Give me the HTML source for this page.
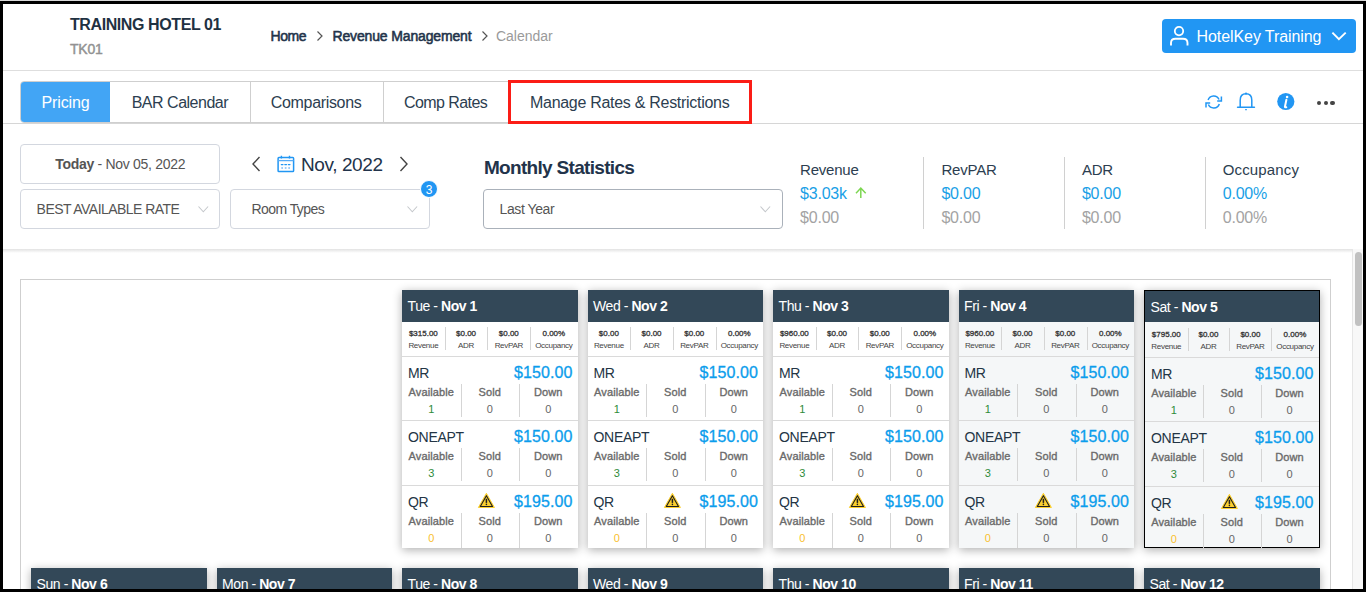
<!DOCTYPE html><html><head><meta charset="utf-8"><style>
html,body{margin:0;padding:0;}
body{width:1366px;height:592px;overflow:hidden;background:#000;position:relative;font-family:"Liberation Sans", sans-serif;}
.t{position:absolute;white-space:nowrap;line-height:1;}
.r{position:absolute;box-sizing:border-box;}
svg{position:absolute;overflow:visible;}
#page{position:absolute;left:3px;top:4px;width:1360px;height:585px;background:#fff;overflow:hidden;}
</style></head><body>
<div class="r" style="left:0;top:0;width:1366px;height:1px;background:#d8d8d8;"></div>
<div id="page"></div>

<div style="position:absolute;left:3px;top:4px;width:1360px;height:585px;overflow:hidden;"><div style="position:absolute;left:-3px;top:-4px;width:1366px;height:592px;">
<div class="t" style="left:70px;top:16.96px;font-size:16px;color:#1f3142;font-weight:bold;letter-spacing:-0.41px;">TRAINING HOTEL 01</div>
<div class="t" style="left:70px;top:41.95px;font-size:14px;color:#929292;letter-spacing:-0.2px;-webkit-text-stroke:0.45px #929292;">TK01</div>
<div class="t" style="left:270.5px;top:29.35px;font-size:14px;color:#22334a;letter-spacing:-0.45px;-webkit-text-stroke:0.55px #22334a;">Home</div>
<div class="t" style="left:332.5px;top:29.35px;font-size:14px;color:#22334a;letter-spacing:-0.15px;-webkit-text-stroke:0.55px #22334a;">Revenue Management</div>
<div class="t" style="left:496px;top:29.05px;font-size:14px;color:#9a9a9a;letter-spacing:-0.03px;">Calendar</div>
<svg style="left:316px;top:30px" width="8" height="12"><path d="M1.5 1.5 L6 6 L1.5 10.5" fill="none" stroke="#555" stroke-width="1.2"/></svg>
<svg style="left:480.7px;top:30px" width="8" height="12"><path d="M1.5 1.5 L6 6 L1.5 10.5" fill="none" stroke="#555" stroke-width="1.2"/></svg>
<div class="r" style="left:1162px;top:19px;width:194px;height:34px;background:#2196f3;border-radius:4px;"></div>
<svg style="left:1169px;top:26px" width="21" height="21"><circle cx="10" cy="5.1" r="4.2" fill="none" stroke="#fff" stroke-width="1.8"/><path d="M2 19.5 V17 Q2 12.8 6.5 12.8 H14 Q18.5 12.8 18.5 17 V19.5" fill="none" stroke="#fff" stroke-width="1.9"/></svg>
<div class="t" style="left:1196.6px;top:29.06px;font-size:16px;color:#ffffff;letter-spacing:-0.09px;">HotelKey Training</div>
<svg style="left:1331px;top:31px" width="16" height="11"><path d="M1.4 1.6 L7.9 8.2 L14.7 1.6" fill="none" stroke="#fff" stroke-width="1.9"/></svg>
<div class="r" style="left:3px;top:70px;width:1360px;height:1px;background:#dedede;"></div>
<div class="r" style="left:20px;top:81px;width:732px;height:42px;border:1px solid #cfcfcf;border-radius:4px 0 0 4px;"></div>
<div class="r" style="left:21px;top:82px;width:89px;height:40px;background:#42a5f5;border-radius:3px 0 0 3px;"></div>
<div class="r" style="left:250px;top:81px;width:1px;height:42px;background:#cfcfcf;"></div>
<div class="r" style="left:383px;top:81px;width:1px;height:42px;background:#cfcfcf;"></div>
<div class="r" style="left:3px;top:123px;width:1360px;height:1px;background:#d6d6d6;"></div>
<div class="t" style="left:41.5px;top:95.46px;font-size:16px;color:#ffffff;letter-spacing:-0.14px;">Pricing</div>
<div class="t" style="left:131.7px;top:95.46px;font-size:16px;color:#2c3e50;letter-spacing:-0.49px;">BAR Calendar</div>
<div class="t" style="left:270.8px;top:95.46px;font-size:16px;color:#2c3e50;letter-spacing:-0.33px;">Comparisons</div>
<div class="t" style="left:404px;top:95.46px;font-size:16px;color:#2c3e50;letter-spacing:-0.58px;">Comp Rates</div>
<div class="t" style="left:530px;top:95.46px;font-size:16px;color:#2c3e50;letter-spacing:-0.29px;">Manage Rates &amp; Restrictions</div>
<div class="r" style="left:508px;top:79.6px;width:244.4px;height:44px;border:3px solid #fb1d16;"></div>
<svg style="left:1205px;top:94px" width="18" height="16" viewBox="0 0 18 16"><g fill="none" stroke="#2196f3" stroke-width="1.5"><path d="M3.1 6.1 A5.9 5.9 0 0 1 14.05 5.5"/><path d="M16.4 2.4 V6.9 H12.2"/><g transform="rotate(180 8.7 8)"><path d="M3.1 6.1 A5.9 5.9 0 0 1 14.05 5.5"/><path d="M16.4 2.4 V6.9 H12.2"/></g></g></svg>
<svg style="left:1237px;top:92px" width="18" height="19" viewBox="0 0 18 19"><path d="M3.2 15 V8.2 Q3.2 1.8 9 1.8 Q14.8 1.8 14.8 8.2 V15" fill="none" stroke="#2196f3" stroke-width="1.5"/><path d="M0.6 15.2 H17.4" stroke="#2196f3" stroke-width="1.6" stroke-linecap="round"/><circle cx="9" cy="1.6" r="1.1" fill="#2196f3"/><path d="M8.2 17.6 H9.8" stroke="#2196f3" stroke-width="1.3"/></svg>
<svg style="left:1277px;top:92px" width="18" height="19"><circle cx="8.8" cy="9.5" r="8.6" fill="#2196f3"/><circle cx="10.1" cy="5" r="1.3" fill="#fff"/><path d="M9.4 7.8 L7.9 14.8 Q7.9 15.6 9.3 15.2" fill="none" stroke="#fff" stroke-width="2" stroke-linecap="round"/></svg>
<div class="r" style="left:1317.1px;top:100.6px;width:4.4px;height:4.4px;border-radius:50%;background:#444;"></div>
<div class="r" style="left:1323.7px;top:100.6px;width:4.4px;height:4.4px;border-radius:50%;background:#444;"></div>
<div class="r" style="left:1330.3px;top:100.6px;width:4.4px;height:4.4px;border-radius:50%;background:#444;"></div>
<div class="r" style="left:20px;top:144px;width:200px;height:40px;border:1px solid #d3d7df;border-radius:4px;"></div>
<div class="t" style="left:55.2px;top:157.15px;font-size:14px;color:#555;letter-spacing:-0.3px;"><b>Today</b> - Nov 05, 2022</div>
<div class="r" style="left:20px;top:189px;width:200px;height:40px;border:1px solid #d3d7df;border-radius:4px;"></div>
<div class="t" style="left:36.6px;top:202.25px;font-size:14px;color:#555;letter-spacing:-0.54px;">BEST AVAILABLE RATE</div>
<svg style="left:197.5px;top:205.6px" width="11" height="7"><path d="M0.5 0.5 L5.3 5.8 L10.1 0.5" fill="none" stroke="#c5c8cc" stroke-width="1.1"/></svg>
<div class="r" style="left:230px;top:189px;width:200px;height:40px;border:1px solid #d3d7df;border-radius:4px;"></div>
<div class="t" style="left:251.5px;top:201.95px;font-size:14px;color:#555;letter-spacing:-0.57px;">Room Types</div>
<svg style="left:406.5px;top:205.6px" width="11" height="7"><path d="M0.5 0.5 L5.3 5.8 L10.1 0.5" fill="none" stroke="#c5c8cc" stroke-width="1.1"/></svg>
<div class="r" style="left:420px;top:180px;width:18px;height:18px;border-radius:50%;background:#2196f3;border:1px solid #fff;"></div>
<div class="t" style="left:421px;top:183.84px;font-size:12px;color:#fff;width:16px;text-align:center;">3</div>
<svg style="left:251px;top:156px" width="10" height="16"><path d="M8.5 1 L2 8 L8.5 15" fill="none" stroke="#444" stroke-width="1.4"/></svg>
<svg style="left:399px;top:156px" width="10" height="16"><path d="M1.5 1 L8 8 L1.5 15" fill="none" stroke="#444" stroke-width="1.4"/></svg>
<svg style="left:277px;top:155px" width="18" height="18" viewBox="0 0 18 18"><rect x="1.1" y="2.6" width="15.5" height="14" rx="0.8" fill="none" stroke="#2196f3" stroke-width="1.5"/><path d="M1.1 5.6 H16.6" stroke="#59acf6" stroke-width="1.3"/><path d="M4.4 0.8 V3.6 M12.5 0.8 V3.6" stroke="#2196f3" stroke-width="1.4"/><path d="M4.3 9.6 H6 M7.8 9.6 H9.5 M11.3 9.6 H13" stroke="#2196f3" stroke-width="1.2" stroke-linecap="round"/><path d="M4.3 13 H6 M7.8 13 H9.5 M11.3 13 H13" stroke="#7dbcf7" stroke-width="1.3"/></svg>
<div class="t" style="left:301px;top:154.82px;font-size:19px;color:#22334a;letter-spacing:-0.4px;">Nov, 2022</div>
<div class="t" style="left:483.9px;top:158.22px;font-size:19px;color:#22334a;font-weight:bold;letter-spacing:-0.68px;">Monthly Statistics</div>
<div class="r" style="left:483px;top:189px;width:300px;height:40px;border:1px solid #aab1ba;border-radius:4px;"></div>
<div class="t" style="left:499.6px;top:202.45px;font-size:14px;color:#555;letter-spacing:-0.42px;">Last Year</div>
<svg style="left:760px;top:205.6px" width="11" height="7"><path d="M0.5 0.5 L5.3 5.8 L10.1 0.5" fill="none" stroke="#c5c8cc" stroke-width="1.1"/></svg>
<div class="t" style="left:800px;top:162.30px;font-size:15px;color:#2c3e50;letter-spacing:-0.2px;">Revenue</div>
<div class="t" style="left:800px;top:185.66px;font-size:16px;color:#1a9fe6;letter-spacing:-0.2px;">$3.03k</div>
<div class="t" style="left:800px;top:209.76px;font-size:16px;color:#a3a3a3;letter-spacing:-0.2px;">$0.00</div>
<div class="t" style="left:941.4px;top:162.30px;font-size:15px;color:#2c3e50;letter-spacing:-0.2px;">RevPAR</div>
<div class="t" style="left:941.4px;top:185.66px;font-size:16px;color:#1a9fe6;letter-spacing:-0.2px;">$0.00</div>
<div class="t" style="left:941.4px;top:209.76px;font-size:16px;color:#a3a3a3;letter-spacing:-0.2px;">$0.00</div>
<div class="t" style="left:1081.9px;top:162.30px;font-size:15px;color:#2c3e50;letter-spacing:-0.2px;">ADR</div>
<div class="t" style="left:1081.9px;top:185.66px;font-size:16px;color:#1a9fe6;letter-spacing:-0.2px;">$0.00</div>
<div class="t" style="left:1081.9px;top:209.76px;font-size:16px;color:#a3a3a3;letter-spacing:-0.2px;">$0.00</div>
<div class="t" style="left:1222.7px;top:162.30px;font-size:15px;color:#2c3e50;letter-spacing:0.15px;">Occupancy</div>
<div class="t" style="left:1222.7px;top:185.66px;font-size:16px;color:#1a9fe6;letter-spacing:-0.2px;">0.00%</div>
<div class="t" style="left:1222.7px;top:209.76px;font-size:16px;color:#a3a3a3;letter-spacing:-0.2px;">0.00%</div>
<svg style="left:855px;top:187px" width="12" height="12"><path d="M5.8 11 V1.5 M1 6.2 L5.8 1.1 L10.7 6.2" fill="none" stroke="#7dd652" stroke-width="1.5"/></svg>
<div class="r" style="left:923px;top:157px;width:1px;height:72px;background:#d0d0d0;"></div>
<div class="r" style="left:1064px;top:157px;width:1px;height:72px;background:#d0d0d0;"></div>
<div class="r" style="left:1205px;top:157px;width:1px;height:72px;background:#d0d0d0;"></div>
<div class="r" style="left:3px;top:249px;width:1349px;height:4px;background:linear-gradient(#e2e2e2,#fff);"></div>
<div class="r" style="left:1352px;top:249px;width:11px;height:340px;background:#f8f8f8;border-left:1px solid #e6e6e6;"></div>
<div class="r" style="left:1355px;top:252px;width:7px;height:74px;background:#c1c1c1;border-radius:4px;"></div>
<div class="r" style="left:20px;top:279px;width:1311px;height:400px;border:1px solid #cfcfcf;"></div>
<div class="r" style="left:402px;top:290px;width:175.5px;height:258px;background:#ffffff;box-shadow:0 2px 9px rgba(0,0,0,0.32);"></div>
<div class="r" style="left:402px;top:290px;width:175.5px;height:32px;background:#334858;"></div>
<div class="t" style="left:407.6px;top:299.15px;font-size:14px;color:#ffffff;letter-spacing:-0.44px;">Tue - <b>Nov 1</b></div>
<div class="t" style="left:402px;top:330.23px;font-size:8px;color:#333;width:42.7px;text-align:center;-webkit-text-stroke:0.3px #333;">$315.00</div>
<div class="t" style="left:402px;top:342.13px;font-size:8px;color:#444;letter-spacing:-0.3px;width:42.7px;text-align:center;">Revenue</div>
<div class="t" style="left:444.7px;top:330.23px;font-size:8px;color:#333;width:42.7px;text-align:center;-webkit-text-stroke:0.3px #333;">$0.00</div>
<div class="t" style="left:444.7px;top:342.13px;font-size:8px;color:#444;letter-spacing:-0.3px;width:42.7px;text-align:center;">ADR</div>
<div class="r" style="left:444.7px;top:327px;width:1px;height:23.4px;background:#d5d5d5;"></div>
<div class="t" style="left:487.4px;top:330.23px;font-size:8px;color:#333;width:42.79999999999998px;text-align:center;-webkit-text-stroke:0.3px #333;">$0.00</div>
<div class="t" style="left:487.4px;top:342.13px;font-size:8px;color:#444;letter-spacing:-0.3px;width:42.79999999999998px;text-align:center;">RevPAR</div>
<div class="r" style="left:487.4px;top:327px;width:1px;height:23.4px;background:#d5d5d5;"></div>
<div class="t" style="left:530.2px;top:330.23px;font-size:8px;color:#333;width:47.30000000000001px;text-align:center;-webkit-text-stroke:0.3px #333;">0.00%</div>
<div class="t" style="left:530.2px;top:342.13px;font-size:8px;color:#444;letter-spacing:-0.3px;width:47.30000000000001px;text-align:center;">Occupancy</div>
<div class="r" style="left:530.2px;top:327px;width:1px;height:23.4px;background:#d5d5d5;"></div>
<div class="r" style="left:402px;top:356px;width:175.5px;height:1px;background:#dadada;"></div>
<div class="t" style="left:408px;top:365.95px;font-size:14px;color:#233545;letter-spacing:-0.3px;">MR</div>
<div class="t" style="left:502.5px;top:364.76px;font-size:16px;color:#0b9dec;letter-spacing:0.1px;width:70px;text-align:right;-webkit-text-stroke:0.3px #0b9dec;">$150.00</div>
<div class="t" style="left:402.0px;top:386.59px;font-size:11px;color:#6a6a6a;letter-spacing:0.1px;width:58.5px;text-align:center;-webkit-text-stroke:0.35px #6a6a6a;">Available</div>
<div class="t" style="left:402.0px;top:404.19px;font-size:11px;color:#2e8b3a;width:58.5px;text-align:center;">1</div>
<div class="t" style="left:460.5px;top:386.59px;font-size:11px;color:#6a6a6a;letter-spacing:0.1px;width:58.5px;text-align:center;-webkit-text-stroke:0.35px #6a6a6a;">Sold</div>
<div class="t" style="left:460.5px;top:404.19px;font-size:11px;color:#666;width:58.5px;text-align:center;">0</div>
<div class="r" style="left:460.5px;top:384.4px;width:1px;height:32.4px;background:#d5d5d5;"></div>
<div class="t" style="left:519.0px;top:386.59px;font-size:11px;color:#6a6a6a;letter-spacing:0.1px;width:58.5px;text-align:center;-webkit-text-stroke:0.35px #6a6a6a;">Down</div>
<div class="t" style="left:519.0px;top:404.19px;font-size:11px;color:#666;width:58.5px;text-align:center;">0</div>
<div class="r" style="left:519.0px;top:384.4px;width:1px;height:32.4px;background:#d5d5d5;"></div>
<div class="r" style="left:402px;top:420px;width:175.5px;height:1px;background:#dadada;"></div>
<div class="t" style="left:408px;top:429.95px;font-size:14px;color:#233545;letter-spacing:-0.3px;">ONEAPT</div>
<div class="t" style="left:502.5px;top:428.76px;font-size:16px;color:#0b9dec;letter-spacing:0.1px;width:70px;text-align:right;-webkit-text-stroke:0.3px #0b9dec;">$150.00</div>
<div class="t" style="left:402.0px;top:450.59px;font-size:11px;color:#6a6a6a;letter-spacing:0.1px;width:58.5px;text-align:center;-webkit-text-stroke:0.35px #6a6a6a;">Available</div>
<div class="t" style="left:402.0px;top:468.19px;font-size:11px;color:#2e8b3a;width:58.5px;text-align:center;">3</div>
<div class="t" style="left:460.5px;top:450.59px;font-size:11px;color:#6a6a6a;letter-spacing:0.1px;width:58.5px;text-align:center;-webkit-text-stroke:0.35px #6a6a6a;">Sold</div>
<div class="t" style="left:460.5px;top:468.19px;font-size:11px;color:#666;width:58.5px;text-align:center;">0</div>
<div class="r" style="left:460.5px;top:448.4px;width:1px;height:32.4px;background:#d5d5d5;"></div>
<div class="t" style="left:519.0px;top:450.59px;font-size:11px;color:#6a6a6a;letter-spacing:0.1px;width:58.5px;text-align:center;-webkit-text-stroke:0.35px #6a6a6a;">Down</div>
<div class="t" style="left:519.0px;top:468.19px;font-size:11px;color:#666;width:58.5px;text-align:center;">0</div>
<div class="r" style="left:519.0px;top:448.4px;width:1px;height:32.4px;background:#d5d5d5;"></div>
<div class="r" style="left:402px;top:485px;width:175.5px;height:1px;background:#dadada;"></div>
<div class="t" style="left:408px;top:494.95px;font-size:14px;color:#233545;letter-spacing:-0.3px;">QR</div>
<div class="t" style="left:502.5px;top:493.76px;font-size:16px;color:#0b9dec;letter-spacing:0.1px;width:70px;text-align:right;-webkit-text-stroke:0.3px #0b9dec;">$195.00</div>
<svg style="left:478px;top:492px" width="17" height="17" viewBox="0 0 17 17"><path d="M8.4 1.3 L16.4 15.5 H0.4 Z" fill="#fbcf2f" stroke="#fbcf2f" stroke-width="1" stroke-linejoin="round"/><path d="M8.4 3.7 L14.5 14.5 H2.3 Z" fill="none" stroke="#1f1f1f" stroke-width="1.1" stroke-linejoin="round"/><path d="M8.4 6.8 V10.9" stroke="#1f1f1f" stroke-width="1.5"/><circle cx="8.4" cy="12.4" r="0.8" fill="#1f1f1f"/></svg>
<div class="t" style="left:402.0px;top:515.59px;font-size:11px;color:#6a6a6a;letter-spacing:0.1px;width:58.5px;text-align:center;-webkit-text-stroke:0.35px #6a6a6a;">Available</div>
<div class="t" style="left:402.0px;top:533.19px;font-size:11px;color:#f9c02c;width:58.5px;text-align:center;">0</div>
<div class="t" style="left:460.5px;top:515.59px;font-size:11px;color:#6a6a6a;letter-spacing:0.1px;width:58.5px;text-align:center;-webkit-text-stroke:0.35px #6a6a6a;">Sold</div>
<div class="t" style="left:460.5px;top:533.19px;font-size:11px;color:#666;width:58.5px;text-align:center;">0</div>
<div class="r" style="left:460.5px;top:513.4px;width:1px;height:34.60000000000002px;background:#d5d5d5;"></div>
<div class="t" style="left:519.0px;top:515.59px;font-size:11px;color:#6a6a6a;letter-spacing:0.1px;width:58.5px;text-align:center;-webkit-text-stroke:0.35px #6a6a6a;">Down</div>
<div class="t" style="left:519.0px;top:533.19px;font-size:11px;color:#666;width:58.5px;text-align:center;">0</div>
<div class="r" style="left:519.0px;top:513.4px;width:1px;height:34.60000000000002px;background:#d5d5d5;"></div>
<div class="r" style="left:587.5px;top:290px;width:175.5px;height:258px;background:#ffffff;box-shadow:0 2px 9px rgba(0,0,0,0.32);"></div>
<div class="r" style="left:587.5px;top:290px;width:175.5px;height:32px;background:#334858;"></div>
<div class="t" style="left:593.1px;top:299.15px;font-size:14px;color:#ffffff;letter-spacing:-0.44px;">Wed - <b>Nov 2</b></div>
<div class="t" style="left:587.5px;top:330.23px;font-size:8px;color:#333;width:42.7px;text-align:center;-webkit-text-stroke:0.3px #333;">$0.00</div>
<div class="t" style="left:587.5px;top:342.13px;font-size:8px;color:#444;letter-spacing:-0.3px;width:42.7px;text-align:center;">Revenue</div>
<div class="t" style="left:630.2px;top:330.23px;font-size:8px;color:#333;width:42.7px;text-align:center;-webkit-text-stroke:0.3px #333;">$0.00</div>
<div class="t" style="left:630.2px;top:342.13px;font-size:8px;color:#444;letter-spacing:-0.3px;width:42.7px;text-align:center;">ADR</div>
<div class="r" style="left:630.2px;top:327px;width:1px;height:23.4px;background:#d5d5d5;"></div>
<div class="t" style="left:672.9px;top:330.23px;font-size:8px;color:#333;width:42.79999999999998px;text-align:center;-webkit-text-stroke:0.3px #333;">$0.00</div>
<div class="t" style="left:672.9px;top:342.13px;font-size:8px;color:#444;letter-spacing:-0.3px;width:42.79999999999998px;text-align:center;">RevPAR</div>
<div class="r" style="left:672.9px;top:327px;width:1px;height:23.4px;background:#d5d5d5;"></div>
<div class="t" style="left:715.7px;top:330.23px;font-size:8px;color:#333;width:47.30000000000001px;text-align:center;-webkit-text-stroke:0.3px #333;">0.00%</div>
<div class="t" style="left:715.7px;top:342.13px;font-size:8px;color:#444;letter-spacing:-0.3px;width:47.30000000000001px;text-align:center;">Occupancy</div>
<div class="r" style="left:715.7px;top:327px;width:1px;height:23.4px;background:#d5d5d5;"></div>
<div class="r" style="left:587.5px;top:356px;width:175.5px;height:1px;background:#dadada;"></div>
<div class="t" style="left:593.5px;top:365.95px;font-size:14px;color:#233545;letter-spacing:-0.3px;">MR</div>
<div class="t" style="left:688.0px;top:364.76px;font-size:16px;color:#0b9dec;letter-spacing:0.1px;width:70px;text-align:right;-webkit-text-stroke:0.3px #0b9dec;">$150.00</div>
<div class="t" style="left:587.5px;top:386.59px;font-size:11px;color:#6a6a6a;letter-spacing:0.1px;width:58.5px;text-align:center;-webkit-text-stroke:0.35px #6a6a6a;">Available</div>
<div class="t" style="left:587.5px;top:404.19px;font-size:11px;color:#2e8b3a;width:58.5px;text-align:center;">1</div>
<div class="t" style="left:646.0px;top:386.59px;font-size:11px;color:#6a6a6a;letter-spacing:0.1px;width:58.5px;text-align:center;-webkit-text-stroke:0.35px #6a6a6a;">Sold</div>
<div class="t" style="left:646.0px;top:404.19px;font-size:11px;color:#666;width:58.5px;text-align:center;">0</div>
<div class="r" style="left:646.0px;top:384.4px;width:1px;height:32.4px;background:#d5d5d5;"></div>
<div class="t" style="left:704.5px;top:386.59px;font-size:11px;color:#6a6a6a;letter-spacing:0.1px;width:58.5px;text-align:center;-webkit-text-stroke:0.35px #6a6a6a;">Down</div>
<div class="t" style="left:704.5px;top:404.19px;font-size:11px;color:#666;width:58.5px;text-align:center;">0</div>
<div class="r" style="left:704.5px;top:384.4px;width:1px;height:32.4px;background:#d5d5d5;"></div>
<div class="r" style="left:587.5px;top:420px;width:175.5px;height:1px;background:#dadada;"></div>
<div class="t" style="left:593.5px;top:429.95px;font-size:14px;color:#233545;letter-spacing:-0.3px;">ONEAPT</div>
<div class="t" style="left:688.0px;top:428.76px;font-size:16px;color:#0b9dec;letter-spacing:0.1px;width:70px;text-align:right;-webkit-text-stroke:0.3px #0b9dec;">$150.00</div>
<div class="t" style="left:587.5px;top:450.59px;font-size:11px;color:#6a6a6a;letter-spacing:0.1px;width:58.5px;text-align:center;-webkit-text-stroke:0.35px #6a6a6a;">Available</div>
<div class="t" style="left:587.5px;top:468.19px;font-size:11px;color:#2e8b3a;width:58.5px;text-align:center;">3</div>
<div class="t" style="left:646.0px;top:450.59px;font-size:11px;color:#6a6a6a;letter-spacing:0.1px;width:58.5px;text-align:center;-webkit-text-stroke:0.35px #6a6a6a;">Sold</div>
<div class="t" style="left:646.0px;top:468.19px;font-size:11px;color:#666;width:58.5px;text-align:center;">0</div>
<div class="r" style="left:646.0px;top:448.4px;width:1px;height:32.4px;background:#d5d5d5;"></div>
<div class="t" style="left:704.5px;top:450.59px;font-size:11px;color:#6a6a6a;letter-spacing:0.1px;width:58.5px;text-align:center;-webkit-text-stroke:0.35px #6a6a6a;">Down</div>
<div class="t" style="left:704.5px;top:468.19px;font-size:11px;color:#666;width:58.5px;text-align:center;">0</div>
<div class="r" style="left:704.5px;top:448.4px;width:1px;height:32.4px;background:#d5d5d5;"></div>
<div class="r" style="left:587.5px;top:485px;width:175.5px;height:1px;background:#dadada;"></div>
<div class="t" style="left:593.5px;top:494.95px;font-size:14px;color:#233545;letter-spacing:-0.3px;">QR</div>
<div class="t" style="left:688.0px;top:493.76px;font-size:16px;color:#0b9dec;letter-spacing:0.1px;width:70px;text-align:right;-webkit-text-stroke:0.3px #0b9dec;">$195.00</div>
<svg style="left:663.5px;top:492px" width="17" height="17" viewBox="0 0 17 17"><path d="M8.4 1.3 L16.4 15.5 H0.4 Z" fill="#fbcf2f" stroke="#fbcf2f" stroke-width="1" stroke-linejoin="round"/><path d="M8.4 3.7 L14.5 14.5 H2.3 Z" fill="none" stroke="#1f1f1f" stroke-width="1.1" stroke-linejoin="round"/><path d="M8.4 6.8 V10.9" stroke="#1f1f1f" stroke-width="1.5"/><circle cx="8.4" cy="12.4" r="0.8" fill="#1f1f1f"/></svg>
<div class="t" style="left:587.5px;top:515.59px;font-size:11px;color:#6a6a6a;letter-spacing:0.1px;width:58.5px;text-align:center;-webkit-text-stroke:0.35px #6a6a6a;">Available</div>
<div class="t" style="left:587.5px;top:533.19px;font-size:11px;color:#f9c02c;width:58.5px;text-align:center;">0</div>
<div class="t" style="left:646.0px;top:515.59px;font-size:11px;color:#6a6a6a;letter-spacing:0.1px;width:58.5px;text-align:center;-webkit-text-stroke:0.35px #6a6a6a;">Sold</div>
<div class="t" style="left:646.0px;top:533.19px;font-size:11px;color:#666;width:58.5px;text-align:center;">0</div>
<div class="r" style="left:646.0px;top:513.4px;width:1px;height:34.60000000000002px;background:#d5d5d5;"></div>
<div class="t" style="left:704.5px;top:515.59px;font-size:11px;color:#6a6a6a;letter-spacing:0.1px;width:58.5px;text-align:center;-webkit-text-stroke:0.35px #6a6a6a;">Down</div>
<div class="t" style="left:704.5px;top:533.19px;font-size:11px;color:#666;width:58.5px;text-align:center;">0</div>
<div class="r" style="left:704.5px;top:513.4px;width:1px;height:34.60000000000002px;background:#d5d5d5;"></div>
<div class="r" style="left:773px;top:290px;width:175.5px;height:258px;background:#ffffff;box-shadow:0 2px 9px rgba(0,0,0,0.32);"></div>
<div class="r" style="left:773px;top:290px;width:175.5px;height:32px;background:#334858;"></div>
<div class="t" style="left:778.6px;top:299.15px;font-size:14px;color:#ffffff;letter-spacing:-0.44px;">Thu - <b>Nov 3</b></div>
<div class="t" style="left:773px;top:330.23px;font-size:8px;color:#333;width:42.7px;text-align:center;-webkit-text-stroke:0.3px #333;">$960.00</div>
<div class="t" style="left:773px;top:342.13px;font-size:8px;color:#444;letter-spacing:-0.3px;width:42.7px;text-align:center;">Revenue</div>
<div class="t" style="left:815.7px;top:330.23px;font-size:8px;color:#333;width:42.7px;text-align:center;-webkit-text-stroke:0.3px #333;">$0.00</div>
<div class="t" style="left:815.7px;top:342.13px;font-size:8px;color:#444;letter-spacing:-0.3px;width:42.7px;text-align:center;">ADR</div>
<div class="r" style="left:815.7px;top:327px;width:1px;height:23.4px;background:#d5d5d5;"></div>
<div class="t" style="left:858.4px;top:330.23px;font-size:8px;color:#333;width:42.79999999999998px;text-align:center;-webkit-text-stroke:0.3px #333;">$0.00</div>
<div class="t" style="left:858.4px;top:342.13px;font-size:8px;color:#444;letter-spacing:-0.3px;width:42.79999999999998px;text-align:center;">RevPAR</div>
<div class="r" style="left:858.4px;top:327px;width:1px;height:23.4px;background:#d5d5d5;"></div>
<div class="t" style="left:901.2px;top:330.23px;font-size:8px;color:#333;width:47.30000000000001px;text-align:center;-webkit-text-stroke:0.3px #333;">0.00%</div>
<div class="t" style="left:901.2px;top:342.13px;font-size:8px;color:#444;letter-spacing:-0.3px;width:47.30000000000001px;text-align:center;">Occupancy</div>
<div class="r" style="left:901.2px;top:327px;width:1px;height:23.4px;background:#d5d5d5;"></div>
<div class="r" style="left:773px;top:356px;width:175.5px;height:1px;background:#dadada;"></div>
<div class="t" style="left:779px;top:365.95px;font-size:14px;color:#233545;letter-spacing:-0.3px;">MR</div>
<div class="t" style="left:873.5px;top:364.76px;font-size:16px;color:#0b9dec;letter-spacing:0.1px;width:70px;text-align:right;-webkit-text-stroke:0.3px #0b9dec;">$150.00</div>
<div class="t" style="left:773.0px;top:386.59px;font-size:11px;color:#6a6a6a;letter-spacing:0.1px;width:58.5px;text-align:center;-webkit-text-stroke:0.35px #6a6a6a;">Available</div>
<div class="t" style="left:773.0px;top:404.19px;font-size:11px;color:#2e8b3a;width:58.5px;text-align:center;">1</div>
<div class="t" style="left:831.5px;top:386.59px;font-size:11px;color:#6a6a6a;letter-spacing:0.1px;width:58.5px;text-align:center;-webkit-text-stroke:0.35px #6a6a6a;">Sold</div>
<div class="t" style="left:831.5px;top:404.19px;font-size:11px;color:#666;width:58.5px;text-align:center;">0</div>
<div class="r" style="left:831.5px;top:384.4px;width:1px;height:32.4px;background:#d5d5d5;"></div>
<div class="t" style="left:890.0px;top:386.59px;font-size:11px;color:#6a6a6a;letter-spacing:0.1px;width:58.5px;text-align:center;-webkit-text-stroke:0.35px #6a6a6a;">Down</div>
<div class="t" style="left:890.0px;top:404.19px;font-size:11px;color:#666;width:58.5px;text-align:center;">0</div>
<div class="r" style="left:890.0px;top:384.4px;width:1px;height:32.4px;background:#d5d5d5;"></div>
<div class="r" style="left:773px;top:420px;width:175.5px;height:1px;background:#dadada;"></div>
<div class="t" style="left:779px;top:429.95px;font-size:14px;color:#233545;letter-spacing:-0.3px;">ONEAPT</div>
<div class="t" style="left:873.5px;top:428.76px;font-size:16px;color:#0b9dec;letter-spacing:0.1px;width:70px;text-align:right;-webkit-text-stroke:0.3px #0b9dec;">$150.00</div>
<div class="t" style="left:773.0px;top:450.59px;font-size:11px;color:#6a6a6a;letter-spacing:0.1px;width:58.5px;text-align:center;-webkit-text-stroke:0.35px #6a6a6a;">Available</div>
<div class="t" style="left:773.0px;top:468.19px;font-size:11px;color:#2e8b3a;width:58.5px;text-align:center;">3</div>
<div class="t" style="left:831.5px;top:450.59px;font-size:11px;color:#6a6a6a;letter-spacing:0.1px;width:58.5px;text-align:center;-webkit-text-stroke:0.35px #6a6a6a;">Sold</div>
<div class="t" style="left:831.5px;top:468.19px;font-size:11px;color:#666;width:58.5px;text-align:center;">0</div>
<div class="r" style="left:831.5px;top:448.4px;width:1px;height:32.4px;background:#d5d5d5;"></div>
<div class="t" style="left:890.0px;top:450.59px;font-size:11px;color:#6a6a6a;letter-spacing:0.1px;width:58.5px;text-align:center;-webkit-text-stroke:0.35px #6a6a6a;">Down</div>
<div class="t" style="left:890.0px;top:468.19px;font-size:11px;color:#666;width:58.5px;text-align:center;">0</div>
<div class="r" style="left:890.0px;top:448.4px;width:1px;height:32.4px;background:#d5d5d5;"></div>
<div class="r" style="left:773px;top:485px;width:175.5px;height:1px;background:#dadada;"></div>
<div class="t" style="left:779px;top:494.95px;font-size:14px;color:#233545;letter-spacing:-0.3px;">QR</div>
<div class="t" style="left:873.5px;top:493.76px;font-size:16px;color:#0b9dec;letter-spacing:0.1px;width:70px;text-align:right;-webkit-text-stroke:0.3px #0b9dec;">$195.00</div>
<svg style="left:849px;top:492px" width="17" height="17" viewBox="0 0 17 17"><path d="M8.4 1.3 L16.4 15.5 H0.4 Z" fill="#fbcf2f" stroke="#fbcf2f" stroke-width="1" stroke-linejoin="round"/><path d="M8.4 3.7 L14.5 14.5 H2.3 Z" fill="none" stroke="#1f1f1f" stroke-width="1.1" stroke-linejoin="round"/><path d="M8.4 6.8 V10.9" stroke="#1f1f1f" stroke-width="1.5"/><circle cx="8.4" cy="12.4" r="0.8" fill="#1f1f1f"/></svg>
<div class="t" style="left:773.0px;top:515.59px;font-size:11px;color:#6a6a6a;letter-spacing:0.1px;width:58.5px;text-align:center;-webkit-text-stroke:0.35px #6a6a6a;">Available</div>
<div class="t" style="left:773.0px;top:533.19px;font-size:11px;color:#f9c02c;width:58.5px;text-align:center;">0</div>
<div class="t" style="left:831.5px;top:515.59px;font-size:11px;color:#6a6a6a;letter-spacing:0.1px;width:58.5px;text-align:center;-webkit-text-stroke:0.35px #6a6a6a;">Sold</div>
<div class="t" style="left:831.5px;top:533.19px;font-size:11px;color:#666;width:58.5px;text-align:center;">0</div>
<div class="r" style="left:831.5px;top:513.4px;width:1px;height:34.60000000000002px;background:#d5d5d5;"></div>
<div class="t" style="left:890.0px;top:515.59px;font-size:11px;color:#6a6a6a;letter-spacing:0.1px;width:58.5px;text-align:center;-webkit-text-stroke:0.35px #6a6a6a;">Down</div>
<div class="t" style="left:890.0px;top:533.19px;font-size:11px;color:#666;width:58.5px;text-align:center;">0</div>
<div class="r" style="left:890.0px;top:513.4px;width:1px;height:34.60000000000002px;background:#d5d5d5;"></div>
<div class="r" style="left:958.5px;top:290px;width:175.5px;height:258px;background:#f5f7f8;box-shadow:0 2px 9px rgba(0,0,0,0.32);"></div>
<div class="r" style="left:958.5px;top:290px;width:175.5px;height:32px;background:#334858;"></div>
<div class="t" style="left:964.1px;top:299.15px;font-size:14px;color:#ffffff;letter-spacing:-0.44px;">Fri - <b>Nov 4</b></div>
<div class="t" style="left:958.5px;top:330.23px;font-size:8px;color:#333;width:42.7px;text-align:center;-webkit-text-stroke:0.3px #333;">$960.00</div>
<div class="t" style="left:958.5px;top:342.13px;font-size:8px;color:#444;letter-spacing:-0.3px;width:42.7px;text-align:center;">Revenue</div>
<div class="t" style="left:1001.2px;top:330.23px;font-size:8px;color:#333;width:42.7px;text-align:center;-webkit-text-stroke:0.3px #333;">$0.00</div>
<div class="t" style="left:1001.2px;top:342.13px;font-size:8px;color:#444;letter-spacing:-0.3px;width:42.7px;text-align:center;">ADR</div>
<div class="r" style="left:1001.2px;top:327px;width:1px;height:23.4px;background:#d5d5d5;"></div>
<div class="t" style="left:1043.9px;top:330.23px;font-size:8px;color:#333;width:42.79999999999998px;text-align:center;-webkit-text-stroke:0.3px #333;">$0.00</div>
<div class="t" style="left:1043.9px;top:342.13px;font-size:8px;color:#444;letter-spacing:-0.3px;width:42.79999999999998px;text-align:center;">RevPAR</div>
<div class="r" style="left:1043.9px;top:327px;width:1px;height:23.4px;background:#d5d5d5;"></div>
<div class="t" style="left:1086.7px;top:330.23px;font-size:8px;color:#333;width:47.30000000000001px;text-align:center;-webkit-text-stroke:0.3px #333;">0.00%</div>
<div class="t" style="left:1086.7px;top:342.13px;font-size:8px;color:#444;letter-spacing:-0.3px;width:47.30000000000001px;text-align:center;">Occupancy</div>
<div class="r" style="left:1086.7px;top:327px;width:1px;height:23.4px;background:#d5d5d5;"></div>
<div class="r" style="left:958.5px;top:356px;width:175.5px;height:1px;background:#dadada;"></div>
<div class="t" style="left:964.5px;top:365.95px;font-size:14px;color:#233545;letter-spacing:-0.3px;">MR</div>
<div class="t" style="left:1059.0px;top:364.76px;font-size:16px;color:#0b9dec;letter-spacing:0.1px;width:70px;text-align:right;-webkit-text-stroke:0.3px #0b9dec;">$150.00</div>
<div class="t" style="left:958.5px;top:386.59px;font-size:11px;color:#6a6a6a;letter-spacing:0.1px;width:58.5px;text-align:center;-webkit-text-stroke:0.35px #6a6a6a;">Available</div>
<div class="t" style="left:958.5px;top:404.19px;font-size:11px;color:#2e8b3a;width:58.5px;text-align:center;">1</div>
<div class="t" style="left:1017.0px;top:386.59px;font-size:11px;color:#6a6a6a;letter-spacing:0.1px;width:58.5px;text-align:center;-webkit-text-stroke:0.35px #6a6a6a;">Sold</div>
<div class="t" style="left:1017.0px;top:404.19px;font-size:11px;color:#666;width:58.5px;text-align:center;">0</div>
<div class="r" style="left:1017.0px;top:384.4px;width:1px;height:32.4px;background:#d5d5d5;"></div>
<div class="t" style="left:1075.5px;top:386.59px;font-size:11px;color:#6a6a6a;letter-spacing:0.1px;width:58.5px;text-align:center;-webkit-text-stroke:0.35px #6a6a6a;">Down</div>
<div class="t" style="left:1075.5px;top:404.19px;font-size:11px;color:#666;width:58.5px;text-align:center;">0</div>
<div class="r" style="left:1075.5px;top:384.4px;width:1px;height:32.4px;background:#d5d5d5;"></div>
<div class="r" style="left:958.5px;top:420px;width:175.5px;height:1px;background:#dadada;"></div>
<div class="t" style="left:964.5px;top:429.95px;font-size:14px;color:#233545;letter-spacing:-0.3px;">ONEAPT</div>
<div class="t" style="left:1059.0px;top:428.76px;font-size:16px;color:#0b9dec;letter-spacing:0.1px;width:70px;text-align:right;-webkit-text-stroke:0.3px #0b9dec;">$150.00</div>
<div class="t" style="left:958.5px;top:450.59px;font-size:11px;color:#6a6a6a;letter-spacing:0.1px;width:58.5px;text-align:center;-webkit-text-stroke:0.35px #6a6a6a;">Available</div>
<div class="t" style="left:958.5px;top:468.19px;font-size:11px;color:#2e8b3a;width:58.5px;text-align:center;">3</div>
<div class="t" style="left:1017.0px;top:450.59px;font-size:11px;color:#6a6a6a;letter-spacing:0.1px;width:58.5px;text-align:center;-webkit-text-stroke:0.35px #6a6a6a;">Sold</div>
<div class="t" style="left:1017.0px;top:468.19px;font-size:11px;color:#666;width:58.5px;text-align:center;">0</div>
<div class="r" style="left:1017.0px;top:448.4px;width:1px;height:32.4px;background:#d5d5d5;"></div>
<div class="t" style="left:1075.5px;top:450.59px;font-size:11px;color:#6a6a6a;letter-spacing:0.1px;width:58.5px;text-align:center;-webkit-text-stroke:0.35px #6a6a6a;">Down</div>
<div class="t" style="left:1075.5px;top:468.19px;font-size:11px;color:#666;width:58.5px;text-align:center;">0</div>
<div class="r" style="left:1075.5px;top:448.4px;width:1px;height:32.4px;background:#d5d5d5;"></div>
<div class="r" style="left:958.5px;top:485px;width:175.5px;height:1px;background:#dadada;"></div>
<div class="t" style="left:964.5px;top:494.95px;font-size:14px;color:#233545;letter-spacing:-0.3px;">QR</div>
<div class="t" style="left:1059.0px;top:493.76px;font-size:16px;color:#0b9dec;letter-spacing:0.1px;width:70px;text-align:right;-webkit-text-stroke:0.3px #0b9dec;">$195.00</div>
<svg style="left:1034.5px;top:492px" width="17" height="17" viewBox="0 0 17 17"><path d="M8.4 1.3 L16.4 15.5 H0.4 Z" fill="#fbcf2f" stroke="#fbcf2f" stroke-width="1" stroke-linejoin="round"/><path d="M8.4 3.7 L14.5 14.5 H2.3 Z" fill="none" stroke="#1f1f1f" stroke-width="1.1" stroke-linejoin="round"/><path d="M8.4 6.8 V10.9" stroke="#1f1f1f" stroke-width="1.5"/><circle cx="8.4" cy="12.4" r="0.8" fill="#1f1f1f"/></svg>
<div class="t" style="left:958.5px;top:515.59px;font-size:11px;color:#6a6a6a;letter-spacing:0.1px;width:58.5px;text-align:center;-webkit-text-stroke:0.35px #6a6a6a;">Available</div>
<div class="t" style="left:958.5px;top:533.19px;font-size:11px;color:#f9c02c;width:58.5px;text-align:center;">0</div>
<div class="t" style="left:1017.0px;top:515.59px;font-size:11px;color:#6a6a6a;letter-spacing:0.1px;width:58.5px;text-align:center;-webkit-text-stroke:0.35px #6a6a6a;">Sold</div>
<div class="t" style="left:1017.0px;top:533.19px;font-size:11px;color:#666;width:58.5px;text-align:center;">0</div>
<div class="r" style="left:1017.0px;top:513.4px;width:1px;height:34.60000000000002px;background:#d5d5d5;"></div>
<div class="t" style="left:1075.5px;top:515.59px;font-size:11px;color:#6a6a6a;letter-spacing:0.1px;width:58.5px;text-align:center;-webkit-text-stroke:0.35px #6a6a6a;">Down</div>
<div class="t" style="left:1075.5px;top:533.19px;font-size:11px;color:#666;width:58.5px;text-align:center;">0</div>
<div class="r" style="left:1075.5px;top:513.4px;width:1px;height:34.60000000000002px;background:#d5d5d5;"></div>
<div class="r" style="left:1144px;top:290px;width:175.5px;height:258px;background:#f5f7f8;box-shadow:0 2px 9px rgba(0,0,0,0.32);border:1px solid #000;"></div>
<div class="r" style="left:1144px;top:290px;width:175.5px;height:32px;background:#334858;border:1px solid #000;border-bottom:none;"></div>
<div class="t" style="left:1150.6px;top:300.15px;font-size:14px;color:#ffffff;letter-spacing:-0.44px;">Sat - <b>Nov 5</b></div>
<div class="t" style="left:1145px;top:331.23px;font-size:8px;color:#333;width:42.6px;text-align:center;-webkit-text-stroke:0.3px #333;">$795.00</div>
<div class="t" style="left:1145px;top:343.13px;font-size:8px;color:#444;letter-spacing:-0.3px;width:42.6px;text-align:center;">Revenue</div>
<div class="t" style="left:1187.6px;top:331.23px;font-size:8px;color:#333;width:41.800000000000004px;text-align:center;-webkit-text-stroke:0.3px #333;">$0.00</div>
<div class="t" style="left:1187.6px;top:343.13px;font-size:8px;color:#444;letter-spacing:-0.3px;width:41.800000000000004px;text-align:center;">ADR</div>
<div class="r" style="left:1187.6px;top:328px;width:1px;height:23.4px;background:#d5d5d5;"></div>
<div class="t" style="left:1229.4px;top:331.23px;font-size:8px;color:#333;width:42.0px;text-align:center;-webkit-text-stroke:0.3px #333;">$0.00</div>
<div class="t" style="left:1229.4px;top:343.13px;font-size:8px;color:#444;letter-spacing:-0.3px;width:42.0px;text-align:center;">RevPAR</div>
<div class="r" style="left:1229.4px;top:328px;width:1px;height:23.4px;background:#d5d5d5;"></div>
<div class="t" style="left:1271.4px;top:331.23px;font-size:8px;color:#333;width:47.099999999999994px;text-align:center;-webkit-text-stroke:0.3px #333;">0.00%</div>
<div class="t" style="left:1271.4px;top:343.13px;font-size:8px;color:#444;letter-spacing:-0.3px;width:47.099999999999994px;text-align:center;">Occupancy</div>
<div class="r" style="left:1271.4px;top:328px;width:1px;height:23.4px;background:#d5d5d5;"></div>
<div class="r" style="left:1145px;top:357px;width:173.5px;height:1px;background:#dadada;"></div>
<div class="t" style="left:1151px;top:366.95px;font-size:14px;color:#233545;letter-spacing:-0.3px;">MR</div>
<div class="t" style="left:1243.5px;top:365.76px;font-size:16px;color:#0b9dec;letter-spacing:0.1px;width:70px;text-align:right;-webkit-text-stroke:0.3px #0b9dec;">$150.00</div>
<div class="t" style="left:1145.0px;top:387.59px;font-size:11px;color:#6a6a6a;letter-spacing:0.1px;width:57.833333333333336px;text-align:center;-webkit-text-stroke:0.35px #6a6a6a;">Available</div>
<div class="t" style="left:1145.0px;top:405.19px;font-size:11px;color:#2e8b3a;width:57.833333333333336px;text-align:center;">1</div>
<div class="t" style="left:1202.8333333333333px;top:387.59px;font-size:11px;color:#6a6a6a;letter-spacing:0.1px;width:57.833333333333336px;text-align:center;-webkit-text-stroke:0.35px #6a6a6a;">Sold</div>
<div class="t" style="left:1202.8333333333333px;top:405.19px;font-size:11px;color:#666;width:57.833333333333336px;text-align:center;">0</div>
<div class="r" style="left:1202.8333333333333px;top:385.4px;width:1px;height:32.4px;background:#d5d5d5;"></div>
<div class="t" style="left:1260.6666666666667px;top:387.59px;font-size:11px;color:#6a6a6a;letter-spacing:0.1px;width:57.833333333333336px;text-align:center;-webkit-text-stroke:0.35px #6a6a6a;">Down</div>
<div class="t" style="left:1260.6666666666667px;top:405.19px;font-size:11px;color:#666;width:57.833333333333336px;text-align:center;">0</div>
<div class="r" style="left:1260.6666666666667px;top:385.4px;width:1px;height:32.4px;background:#d5d5d5;"></div>
<div class="r" style="left:1145px;top:421px;width:173.5px;height:1px;background:#dadada;"></div>
<div class="t" style="left:1151px;top:430.95px;font-size:14px;color:#233545;letter-spacing:-0.3px;">ONEAPT</div>
<div class="t" style="left:1243.5px;top:429.76px;font-size:16px;color:#0b9dec;letter-spacing:0.1px;width:70px;text-align:right;-webkit-text-stroke:0.3px #0b9dec;">$150.00</div>
<div class="t" style="left:1145.0px;top:451.59px;font-size:11px;color:#6a6a6a;letter-spacing:0.1px;width:57.833333333333336px;text-align:center;-webkit-text-stroke:0.35px #6a6a6a;">Available</div>
<div class="t" style="left:1145.0px;top:469.19px;font-size:11px;color:#2e8b3a;width:57.833333333333336px;text-align:center;">3</div>
<div class="t" style="left:1202.8333333333333px;top:451.59px;font-size:11px;color:#6a6a6a;letter-spacing:0.1px;width:57.833333333333336px;text-align:center;-webkit-text-stroke:0.35px #6a6a6a;">Sold</div>
<div class="t" style="left:1202.8333333333333px;top:469.19px;font-size:11px;color:#666;width:57.833333333333336px;text-align:center;">0</div>
<div class="r" style="left:1202.8333333333333px;top:449.4px;width:1px;height:32.4px;background:#d5d5d5;"></div>
<div class="t" style="left:1260.6666666666667px;top:451.59px;font-size:11px;color:#6a6a6a;letter-spacing:0.1px;width:57.833333333333336px;text-align:center;-webkit-text-stroke:0.35px #6a6a6a;">Down</div>
<div class="t" style="left:1260.6666666666667px;top:469.19px;font-size:11px;color:#666;width:57.833333333333336px;text-align:center;">0</div>
<div class="r" style="left:1260.6666666666667px;top:449.4px;width:1px;height:32.4px;background:#d5d5d5;"></div>
<div class="r" style="left:1145px;top:486px;width:173.5px;height:1px;background:#dadada;"></div>
<div class="t" style="left:1151px;top:495.95px;font-size:14px;color:#233545;letter-spacing:-0.3px;">QR</div>
<div class="t" style="left:1243.5px;top:494.76px;font-size:16px;color:#0b9dec;letter-spacing:0.1px;width:70px;text-align:right;-webkit-text-stroke:0.3px #0b9dec;">$195.00</div>
<svg style="left:1221px;top:493px" width="17" height="17" viewBox="0 0 17 17"><path d="M8.4 1.3 L16.4 15.5 H0.4 Z" fill="#fbcf2f" stroke="#fbcf2f" stroke-width="1" stroke-linejoin="round"/><path d="M8.4 3.7 L14.5 14.5 H2.3 Z" fill="none" stroke="#1f1f1f" stroke-width="1.1" stroke-linejoin="round"/><path d="M8.4 6.8 V10.9" stroke="#1f1f1f" stroke-width="1.5"/><circle cx="8.4" cy="12.4" r="0.8" fill="#1f1f1f"/></svg>
<div class="t" style="left:1145.0px;top:516.59px;font-size:11px;color:#6a6a6a;letter-spacing:0.1px;width:57.833333333333336px;text-align:center;-webkit-text-stroke:0.35px #6a6a6a;">Available</div>
<div class="t" style="left:1145.0px;top:534.19px;font-size:11px;color:#f9c02c;width:57.833333333333336px;text-align:center;">0</div>
<div class="t" style="left:1202.8333333333333px;top:516.59px;font-size:11px;color:#6a6a6a;letter-spacing:0.1px;width:57.833333333333336px;text-align:center;-webkit-text-stroke:0.35px #6a6a6a;">Sold</div>
<div class="t" style="left:1202.8333333333333px;top:534.19px;font-size:11px;color:#666;width:57.833333333333336px;text-align:center;">0</div>
<div class="r" style="left:1202.8333333333333px;top:514.4px;width:1px;height:33.60000000000002px;background:#d5d5d5;"></div>
<div class="t" style="left:1260.6666666666667px;top:516.59px;font-size:11px;color:#6a6a6a;letter-spacing:0.1px;width:57.833333333333336px;text-align:center;-webkit-text-stroke:0.35px #6a6a6a;">Down</div>
<div class="t" style="left:1260.6666666666667px;top:534.19px;font-size:11px;color:#666;width:57.833333333333336px;text-align:center;">0</div>
<div class="r" style="left:1260.6666666666667px;top:514.4px;width:1px;height:33.60000000000002px;background:#d5d5d5;"></div>
<div class="r" style="left:31px;top:568px;width:175.5px;height:258px;background:#ffffff;box-shadow:0 2px 9px rgba(0,0,0,0.32);"></div>
<div class="r" style="left:31px;top:568px;width:175.5px;height:32px;background:#334858;"></div>
<div class="t" style="left:36.6px;top:577.15px;font-size:14px;color:#ffffff;letter-spacing:-0.44px;">Sun - <b>Nov 6</b></div>
<div class="r" style="left:216.5px;top:568px;width:175.5px;height:258px;background:#ffffff;box-shadow:0 2px 9px rgba(0,0,0,0.32);"></div>
<div class="r" style="left:216.5px;top:568px;width:175.5px;height:32px;background:#334858;"></div>
<div class="t" style="left:222.1px;top:577.15px;font-size:14px;color:#ffffff;letter-spacing:-0.44px;">Mon - <b>Nov 7</b></div>
<div class="r" style="left:402px;top:568px;width:175.5px;height:258px;background:#ffffff;box-shadow:0 2px 9px rgba(0,0,0,0.32);"></div>
<div class="r" style="left:402px;top:568px;width:175.5px;height:32px;background:#334858;"></div>
<div class="t" style="left:407.6px;top:577.15px;font-size:14px;color:#ffffff;letter-spacing:-0.44px;">Tue - <b>Nov 8</b></div>
<div class="r" style="left:587.5px;top:568px;width:175.5px;height:258px;background:#ffffff;box-shadow:0 2px 9px rgba(0,0,0,0.32);"></div>
<div class="r" style="left:587.5px;top:568px;width:175.5px;height:32px;background:#334858;"></div>
<div class="t" style="left:593.1px;top:577.15px;font-size:14px;color:#ffffff;letter-spacing:-0.44px;">Wed - <b>Nov 9</b></div>
<div class="r" style="left:773px;top:568px;width:175.5px;height:258px;background:#ffffff;box-shadow:0 2px 9px rgba(0,0,0,0.32);"></div>
<div class="r" style="left:773px;top:568px;width:175.5px;height:32px;background:#334858;"></div>
<div class="t" style="left:778.6px;top:577.15px;font-size:14px;color:#ffffff;letter-spacing:-0.44px;">Thu - <b>Nov 10</b></div>
<div class="r" style="left:958.5px;top:568px;width:175.5px;height:258px;background:#f5f7f8;box-shadow:0 2px 9px rgba(0,0,0,0.32);"></div>
<div class="r" style="left:958.5px;top:568px;width:175.5px;height:32px;background:#334858;"></div>
<div class="t" style="left:964.1px;top:577.15px;font-size:14px;color:#ffffff;letter-spacing:-0.44px;">Fri - <b>Nov 11</b></div>
<div class="r" style="left:1144px;top:568px;width:175.5px;height:258px;background:#f5f7f8;box-shadow:0 2px 9px rgba(0,0,0,0.32);"></div>
<div class="r" style="left:1144px;top:568px;width:175.5px;height:32px;background:#334858;"></div>
<div class="t" style="left:1149.6px;top:577.15px;font-size:14px;color:#ffffff;letter-spacing:-0.44px;">Sat - <b>Nov 12</b></div>
</div></div></body></html>
